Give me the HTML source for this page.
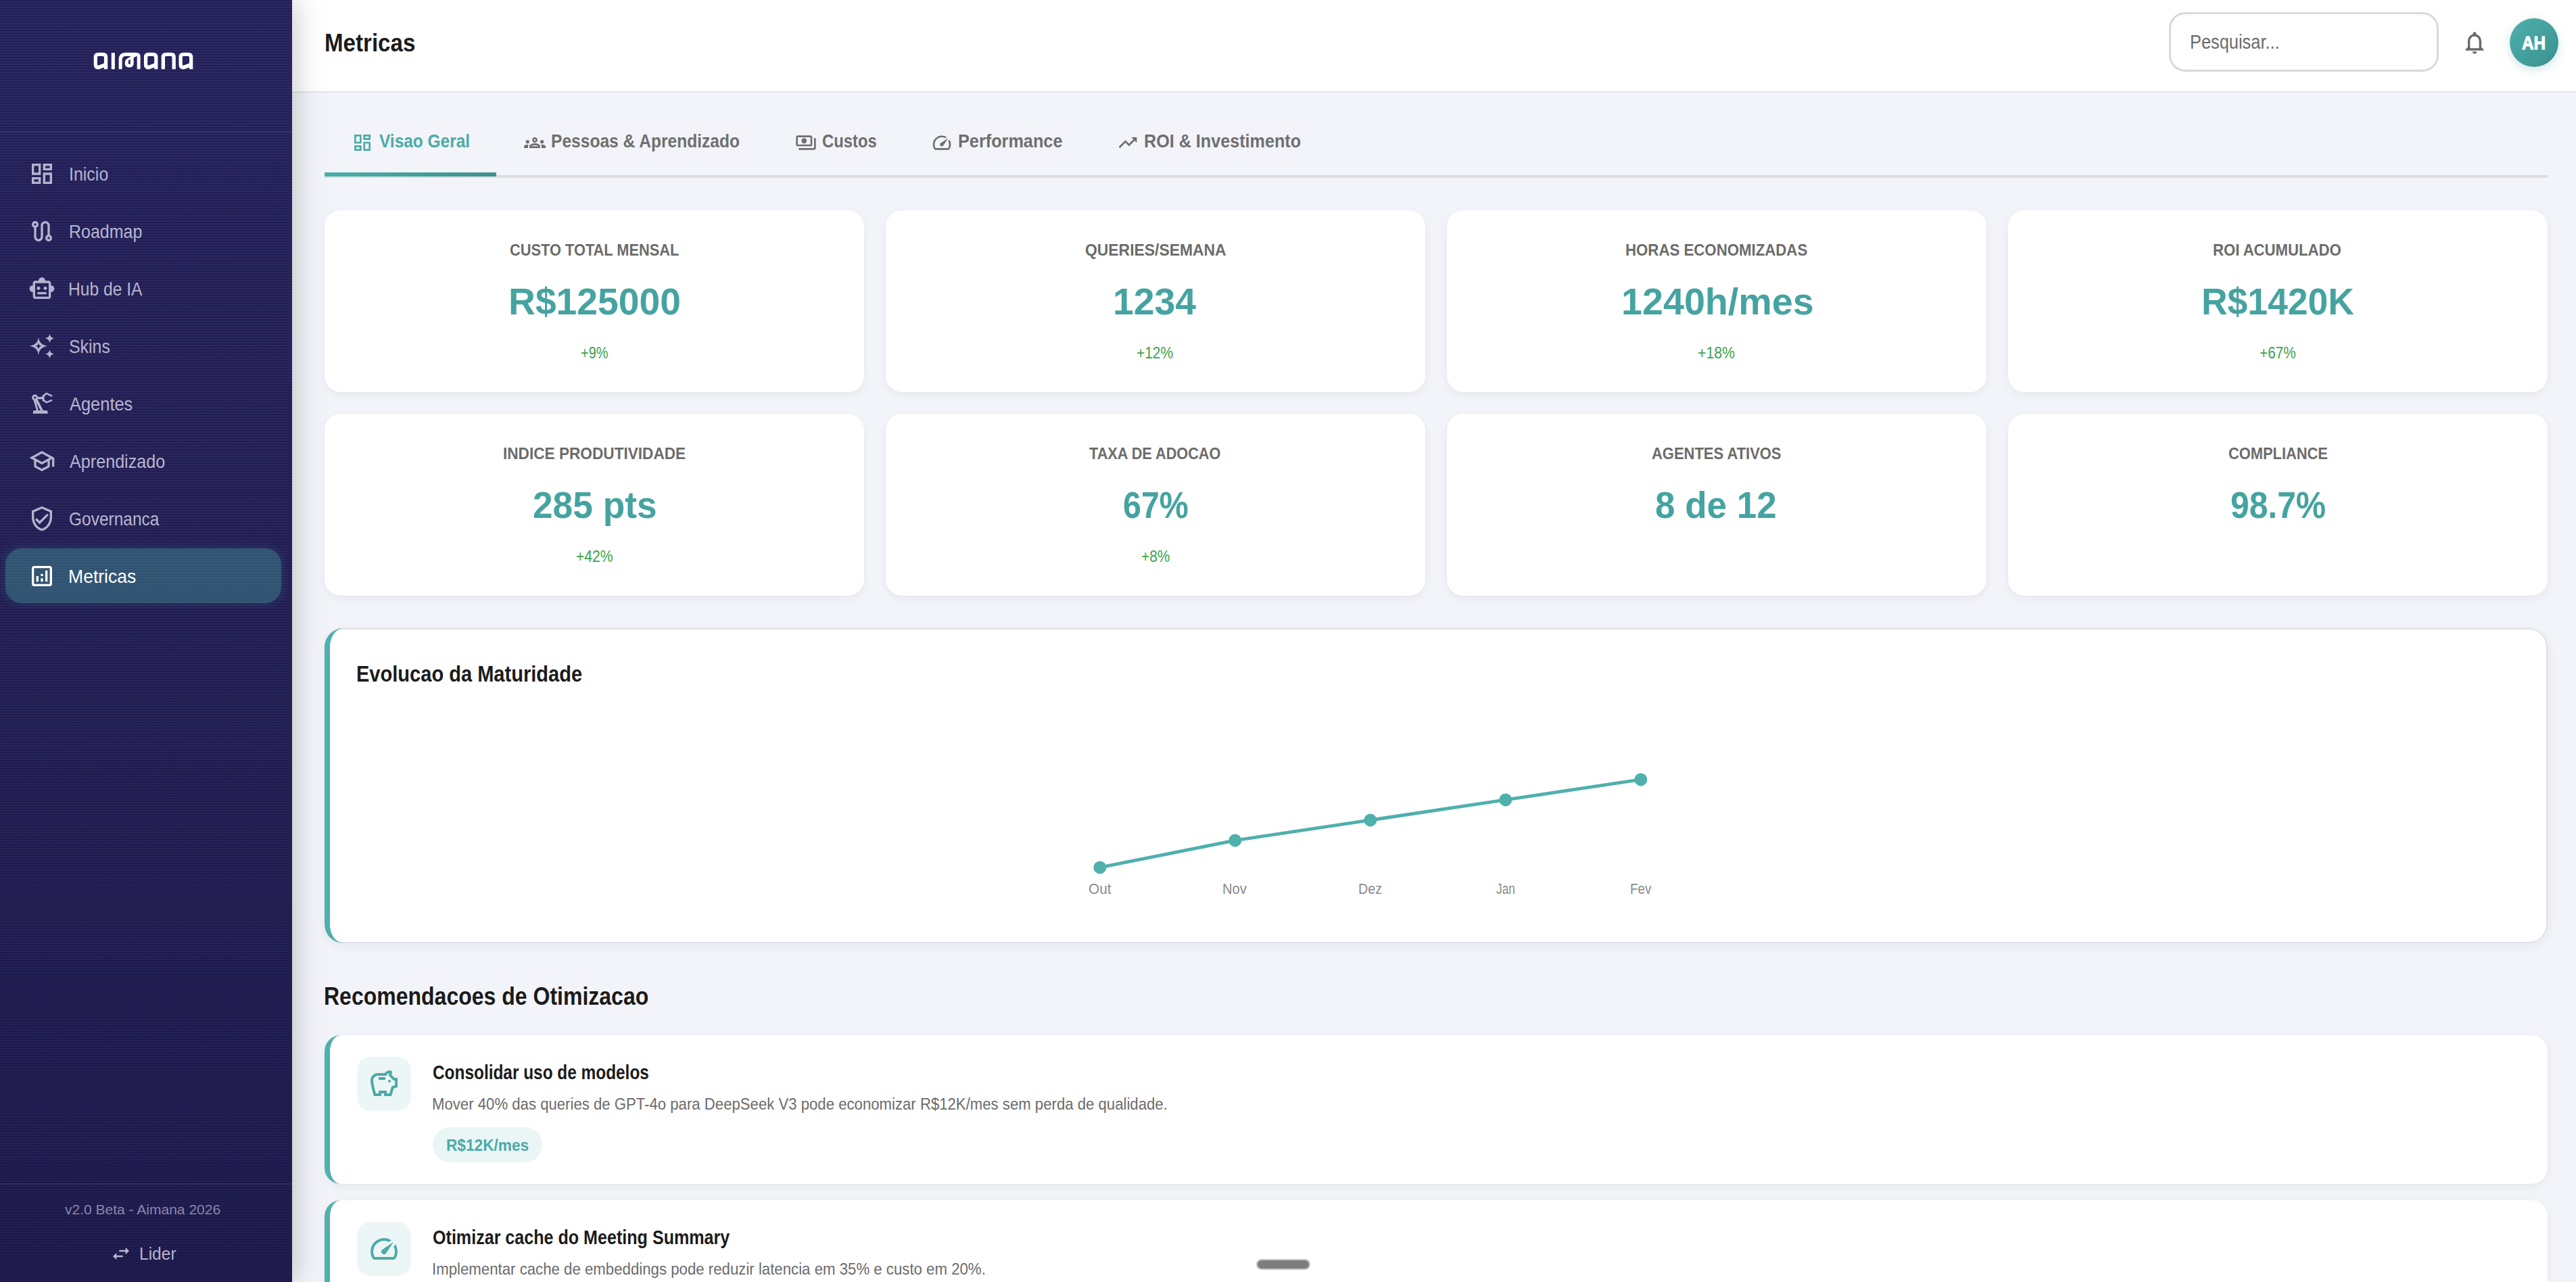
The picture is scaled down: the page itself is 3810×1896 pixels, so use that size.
<!DOCTYPE html>
<html>
<head>
<meta charset="utf-8">
<style>
*{box-sizing:border-box;margin:0;padding:0}
html,body{width:3810px;height:1896px;overflow:hidden;background:#f3f4f9;font-family:"Liberation Sans",sans-serif;position:relative}
.a{position:absolute}
.t{position:absolute;white-space:nowrap;line-height:1}
#sb{left:0;top:0;width:432px;height:1896px;background:linear-gradient(180deg,#2d2962 0%,#2a2659 45%,#221e4e 100%);z-index:5;box-shadow:0 0 44px rgba(0,0,0,0.25)}
#sb:before{content:"";position:absolute;left:0;top:0;right:0;bottom:0;background:repeating-linear-gradient(180deg,rgba(16,14,70,0.36) 0px,rgba(16,14,70,0.36) 2px,rgba(0,0,0,0) 2px,rgba(0,0,0,0) 4px)}
#hdr{left:432px;top:0;width:3378px;height:137px;background:#fff;border-bottom:2px solid #e2e3ea}
.card{position:absolute;background:#fff;border-radius:24px;box-shadow:0 4px 14px rgba(30,30,60,0.05),0 1px 3px rgba(30,30,60,0.03)}
</style>
</head>
<body>
<div id="sb" class="a">
<div class="a" style="left:0;top:194px;width:432px;height:2px;background:rgba(255,255,255,0.07)"></div>
<div class="a" style="left:0;top:1750px;width:432px;height:2px;background:rgba(255,255,255,0.07)"></div>
<svg class="a" style="left:130px;top:70px;width:160px;height:40px" viewBox="0 0 2576 644" fill="#fff">
<path fill-rule="evenodd" d="M250 125 H360 Q470 125 470 235 V520 H385 V480 L260 525 Q140 525 140 415 V235 Q140 125 250 125Z M250 210 Q225 210 225 240 V405 Q225 435 255 432 L385 380 V240 Q385 210 355 210Z"/>
<rect x="560" y="130" width="82" height="390"/>
<path fill-rule="evenodd" d="M1335 235 Q1335 125 1445 125 H1555 Q1665 125 1665 235 V520 H1580 V480 L1455 525 Q1335 525 1335 415Z M1445 210 Q1420 210 1420 240 V405 Q1420 435 1450 432 L1580 380 V240 Q1580 210 1550 210Z"/>
<path d="M1750 520 V235 Q1750 125 1860 125 H1980 Q2090 125 2090 235 V520 H2005 V240 Q2005 210 1975 210 H1865 Q1835 210 1835 240 V520Z"/>
<path fill-rule="evenodd" d="M2165 235 Q2165 125 2275 125 H2390 Q2500 125 2500 235 V520 H2415 V480 L2290 525 Q2165 525 2165 415Z M2275 210 Q2250 210 2250 240 V405 Q2250 435 2280 432 L2415 380 V240 Q2415 210 2385 210Z"/>
<path d="M735 520 V290 Q735 125 900 125 H1150 Q1250 125 1250 225 V520 H1170 V215 Q1170 205 1160 210 L1090 250 Q1090 260 1090 380 Q1090 480 985 480 Q880 480 880 380 Q880 300 940 265 L1030 210 H905 Q815 210 815 300 V520Z M965 310 V400 H1010 V290Z" fill-rule="evenodd"/>
</svg>
<div class="a" style="left:8px;top:811px;width:408px;height:81px;border-radius:24px;background:rgba(74,171,168,0.38);box-shadow:0 0 14px rgba(74,171,168,0.22)"></div>
<svg class="a" style="left:42px;top:237px;width:40px;height:40px;fill:#b6b3cf;stroke:#b6b3cf;stroke-width:0" viewBox="0 0 24 24"><path d="M19 5v2h-4V5h4M9 5v6H5V5h4m10 8v6h-4v-6h4M9 17v2H5v-2h4M21 3h-8v6h8V3zM11 3H3v10h8V3zm10 8h-8v10h8V11zm-10 4H3v6h8v-6z"/></svg>
<div class="t" style="left:101.78px;top:243.95px;font-size:27.5px;color:#b8b5d0;font-weight:normal;transform:scaleX(0.9079);transform-origin:0 0">Inicio</div>
<svg class="a" style="left:42px;top:322px;width:40px;height:40px;fill:#b6b3cf;stroke:#b6b3cf;stroke-width:0" viewBox="0 0 24 24"><path d="M19 15.18V7c0-2.21-1.79-4-4-4s-4 1.79-4 4v10c0 1.1-.9 2-2 2s-2-.9-2-2V8.82C8.16 8.4 9 7.3 9 6c0-1.66-1.34-3-3-3S3 4.34 3 6c0 1.3.84 2.4 2 2.82V17c0 2.21 1.79 4 4 4s4-1.79 4-4V7c0-1.1.9-2 2-2s2 .9 2 2v8.18c-1.16.41-2 1.51-2 2.82 0 1.66 1.34 3 3 3s3-1.34 3-3c0-1.3-.84-2.4-2-2.82zM6 7c-.55 0-1-.45-1-1s.45-1 1-1 1 .45 1 1-.45 1-1 1zm12 12c-.55 0-1-.45-1-1s.45-1 1-1 1 .45 1 1-.45 1-1 1z"/></svg>
<div class="t" style="left:101.78px;top:328.95px;font-size:27.5px;color:#b8b5d0;font-weight:normal;transform:scaleX(0.9081);transform-origin:0 0">Roadmap</div>
<svg class="a" style="left:42px;top:407px;width:40px;height:40px;fill:#b6b3cf;stroke:#b6b3cf;stroke-width:0" viewBox="0 0 24 24"><path d="M20 9V7c0-1.1-.9-2-2-2h-3c0-1.66-1.34-3-3-3S9 3.34 9 5H6c-1.1 0-2 .9-2 2v2c-1.66 0-3 1.34-3 3s1.34 3 3 3v4c0 1.1.9 2 2 2h12c1.1 0 2-.9 2-2v-4c1.66 0 3-1.34 3-3s-1.34-3-3-3zm-2 10H6V7h12v12zm-9-6c-.83 0-1.5-.67-1.5-1.5S8.17 10 9 10s1.5.67 1.5 1.5S9.83 13 9 13zm7.5-1.5c0 .83-.67 1.5-1.5 1.5s-1.5-.67-1.5-1.5.67-1.5 1.5-1.5 1.5.67 1.5 1.5zM8 15h8v2H8v-2z"/></svg>
<div class="t" style="left:100.71px;top:413.95px;font-size:27.5px;color:#b8b5d0;font-weight:normal;transform:scaleX(0.8945);transform-origin:0 0">Hub de IA</div>
<svg class="a" style="left:42px;top:492px;width:40px;height:40px;fill:#b6b3cf;stroke:#b6b3cf;stroke-width:0" viewBox="0 0 24 24"><path fill-rule="evenodd" d="M8.96 4.20 Q9.96 10.90 16.66 11.90 Q9.96 12.90 8.96 19.60 Q7.96 12.90 1.26 11.90 Q7.96 10.90 8.96 4.20Z M8.96 9.00 Q9.25 11.61 11.86 11.90 Q9.25 12.19 8.96 14.80 Q8.67 12.19 6.06 11.90 Q8.67 11.61 8.96 9.00Z"/><path d="M18.88 1.10 Q19.43 4.50 22.83 5.05 Q19.43 5.60 18.88 9.00 Q18.33 5.60 14.93 5.05 Q18.33 4.50 18.88 1.10Z M18.88 14.95 Q19.43 18.35 22.83 18.90 Q19.43 19.45 18.88 22.85 Q18.33 19.45 14.93 18.90 Q18.33 18.35 18.88 14.95Z"/></svg>
<div class="t" style="left:101.59px;top:498.95px;font-size:27.5px;color:#b8b5d0;font-weight:normal;transform:scaleX(0.9054);transform-origin:0 0">Skins</div>
<svg class="a" style="left:42px;top:577px;width:40px;height:40px;fill:#b6b3cf;stroke:#b6b3cf;stroke-width:0" viewBox="0 0 24 24"><path fill-rule="evenodd" d="M3.1 6.6a2.7 2.7 0 1 0 5.4 0a2.7 2.7 0 1 0 -5.4 0Z M4.9 6.6a0.95 0.95 0 1 0 1.9 0a0.95 0.95 0 1 0 -1.9 0Z"/><path d="M8.2 6.0H12.6V8.0H8.2Z M12.3 4.6 L13.3 4.1 L14.1 4.6 V9.6 L13.3 10.1 L12.3 9.6Z"/><path fill="none" stroke-width="1.55" stroke-linecap="round" stroke-linejoin="round" d="M13.6 5.0 L16.1 2.9 L20.5 5.0 M13.6 9.0 L16.1 10.9 L20.5 9.1"/><path fill-rule="evenodd" d="M4.4 8.7 L7.2 18.2 L13.2 18.2 L8.1 7.9Z M6.8 10.3 L8.9 18.2 L10.8 18.2Z"/><path d="M4.1 20.9 V19.5 Q4.1 18 5.6 18 H15.7 Q17.2 18 17.2 19.5 V20.9Z"/></svg>
<div class="t" style="left:102.50px;top:583.95px;font-size:27.5px;color:#b8b5d0;font-weight:normal;transform:scaleX(0.9245);transform-origin:0 0">Agentes</div>
<svg class="a" style="left:42px;top:662px;width:40px;height:40px;fill:#b6b3cf;stroke:#b6b3cf;stroke-width:0" viewBox="0 0 24 24"><path d="M12 3L1 9l4 2.18v6L12 21l7-3.82v-6l2-1.09V17h2V9L12 3zm6.82 6L12 12.72 5.18 9 12 5.28 18.82 9zM17 15.99l-5 2.73-5-2.73v-3.72L12 15l5-2.73v3.72z"/></svg>
<div class="t" style="left:102.50px;top:668.95px;font-size:27.5px;color:#b8b5d0;font-weight:normal;transform:scaleX(0.9148);transform-origin:0 0">Aprendizado</div>
<svg class="a" style="left:42px;top:747px;width:40px;height:40px;fill:#b6b3cf;stroke:#b6b3cf;stroke-width:0" viewBox="0 0 24 24"><path d="M12 1L3 5v6c0 5.55 3.84 10.74 9 12 5.16-1.26 9-6.45 9-12V5l-9-4zm7 10c0 4.52-2.98 8.69-7 9.93-4.02-1.24-7-5.41-7-9.93V6.3l7-3.11 7 3.11V11zm-11.59.59L6 13l4 4 8-8-1.41-1.42L10 14.17z"/></svg>
<div class="t" style="left:101.61px;top:753.95px;font-size:27.5px;color:#b8b5d0;font-weight:normal;transform:scaleX(0.8909);transform-origin:0 0">Governanca</div>
<svg class="a" style="left:42px;top:832px;width:40px;height:40px;fill:#ffffff;stroke:#ffffff;stroke-width:0" viewBox="0 0 24 24"><path d="M19 3H5c-1.1 0-2 .9-2 2v14c0 1.1.9 2 2 2h14c1.1 0 2-.9 2-2V5c0-1.1-.9-2-2-2zm0 16H5V5h14v14zM7 12h2v5H7zm8-5h2v10h-2zm-4 7h2v3h-2zm0-4h2v2h-2z"/></svg>
<div class="t" style="left:100.57px;top:838.95px;font-size:27.5px;color:#ffffff;font-weight:normal;transform:scaleX(0.9659);transform-origin:0 0">Metricas</div>
<div class="t" style="left:96.40px;top:1778.40px;font-size:21px;color:#8b88a9;font-weight:normal;transform:scaleX(1.0006);transform-origin:0 0">v2.0 Beta - Aimana 2026</div>
<svg class="a" style="left:163px;top:1838.3px;width:32px;height:32px;fill:#b8b5d0;stroke:#b8b5d0;stroke-width:0" viewBox="0 0 24 24"><path d="M6.99 11L3 15l3.99 4v-3H14v-2H6.99v-3zM21 9l-3.99-4v3H10v2h7.01v3L21 9z"/></svg>
<div class="t" style="left:206.11px;top:1840.70px;font-size:26px;color:#b8b5d0;font-weight:normal;transform:scaleX(0.9438);transform-origin:0 0">Lider</div>
</div>
<div id="hdr" class="a"></div>
<div class="t" style="left:479.56px;top:45.90px;font-size:36px;color:#1b1b1b;font-weight:bold;transform:scaleX(0.9199);transform-origin:0 0">Metricas</div>
<div class="a" style="left:3208px;top:18px;width:399px;height:88px;border:3px solid #d9d9d9;border-radius:24px;background:#fff"></div>
<div class="t" style="left:3239.15px;top:48.30px;font-size:29px;color:#6b6b6b;font-weight:normal;transform:scaleX(0.8754);transform-origin:0 0">Pesquisar...</div>
<svg class="a" style="left:3640px;top:43px;width:40px;height:40px;fill:#6a6a6a;stroke:#6a6a6a;stroke-width:0" viewBox="0 0 24 24"><path d="M12 22c1.1 0 2-.9 2-2h-4c0 1.1.89 2 2 2zm6-6v-5c0-3.07-1.64-5.64-4.5-6.32V4c0-.83-.67-1.5-1.5-1.5s-1.5.67-1.5 1.5v.68C7.63 5.36 6 7.92 6 11v5l-2 2v1h16v-1l-2-2zm-2 1H8v-6c0-2.48 1.51-4.5 4-4.5s4 2.02 4 4.5v6z"/></svg>
<div class="a" style="left:3712px;top:27px;width:72px;height:72px;border-radius:50%;background:linear-gradient(135deg,#4db0ad,#3b918e);box-shadow:0 4px 14px rgba(60,150,145,0.25)"></div>
<div class="t" style="left:3730.40px;top:49.50px;font-size:28px;color:#ffffff;font-weight:bold;transform:scaleX(0.8643);transform-origin:0 0;-webkit-text-stroke:1.2px #fff">AH</div>
<div class="a" style="left:480px;top:259px;width:3288px;height:4px;background:#dcdcdf"></div>
<div class="a" style="left:480px;top:255px;width:254px;height:6px;background:linear-gradient(90deg,#4aaeaa,#3d928f);border-radius:1px"></div>
<svg class="a" style="left:520px;top:195px;width:32px;height:32px;fill:#4aaba8;stroke:#4aaba8;stroke-width:0" viewBox="0 0 24 24"><path d="M19 5v2h-4V5h4M9 5v6H5V5h4m10 8v6h-4v-6h4M9 17v2H5v-2h4M21 3h-8v6h8V3zM11 3H3v10h8V3zm10 8h-8v10h8V11zm-10 4H3v6h8v-6z"/></svg>
<div class="t" style="left:560.50px;top:194.50px;font-size:28px;color:#4aaba8;font-weight:bold;transform:scaleX(0.8729);transform-origin:0 0">Visao Geral</div>
<svg class="a" style="left:774.5px;top:195px;width:32px;height:32px;fill:#6f6f6f;stroke:#6f6f6f;stroke-width:0" viewBox="0 0 24 24"><path d="M4 13c1.1 0 2-.9 2-2s-.9-2-2-2-2 .9-2 2 .9 2 2 2zm1.13 1.1c-.37-.06-.74-.1-1.13-.1-.99 0-1.93.21-2.78.58C.48 14.9 0 15.62 0 16.43V18h4.5v-1.61c0-.83.23-1.61.63-2.29zM20 13c1.1 0 2-.9 2-2s-.9-2-2-2-2 .9-2 2 .9 2 2 2zm4 3.43c0-.81-.48-1.53-1.22-1.85-.85-.37-1.79-.58-2.78-.58-.39 0-.76.04-1.13.1.4.68.63 1.46.63 2.29V18H24v-1.57zM16.24 13.65c-1.17-.52-2.61-.9-4.24-.9-1.63 0-3.07.39-4.24.9C6.68 14.13 6 15.21 6 16.39V18h12v-1.61c0-1.18-.68-2.26-1.76-2.74zM8.07 16c.09-.23.13-.39.91-.69.97-.38 1.99-.56 3.02-.56s2.05.18 3.02.56c.77.3.81.46.91.69H8.07zM12 8c.55 0 1 .45 1 1s-.45 1-1 1-1-.45-1-1 .45-1 1-1m0-2c-1.66 0-3 1.34-3 3s1.34 3 3 3 3-1.34 3-3-1.34-3-3-3z"/></svg>
<div class="t" style="left:815.12px;top:194.50px;font-size:28px;color:#6f6f6f;font-weight:bold;transform:scaleX(0.8777);transform-origin:0 0">Pessoas &amp; Aprendizado</div>
<svg class="a" style="left:1175.7px;top:195px;width:32px;height:32px;fill:#6f6f6f;stroke:#6f6f6f;stroke-width:0" viewBox="0 0 24 24"><path d="M19 14V6c0-1.1-.9-2-2-2H3c-1.1 0-2 .9-2 2v8c0 1.1.9 2 2 2h14c1.1 0 2-.9 2-2zm-2 0H3V6h14v8zm-7-7c-1.66 0-3 1.34-3 3s1.34 3 3 3 3-1.34 3-3-1.34-3-3-3zm13 0v11c0 1.1-.9 2-2 2H4v-2h17V7h2z"/></svg>
<div class="t" style="left:1215.65px;top:194.50px;font-size:28px;color:#6f6f6f;font-weight:bold;transform:scaleX(0.8519);transform-origin:0 0">Custos</div>
<svg class="a" style="left:1376.7px;top:195px;width:32px;height:32px;fill:#6f6f6f;stroke:#6f6f6f;stroke-width:0" viewBox="0 0 24 24"><path d="M20.38 8.57l-1.23 1.85a8 8 0 0 1-.22 7.58H5.07A8 8 0 0 1 15.58 6.85l1.85-1.23A10 10 0 0 0 3.35 19a2 2 0 0 0 1.72 1h13.85a2 2 0 0 0 1.74-1 10 10 0 0 0-.27-10.44zm-9.79 6.84a2 2 0 0 0 2.83 0l5.66-8.49-8.49 5.66a2 2 0 0 0 0 2.83z"/></svg>
<div class="t" style="left:1417.10px;top:194.50px;font-size:28px;color:#6f6f6f;font-weight:bold;transform:scaleX(0.9021);transform-origin:0 0">Performance</div>
<svg class="a" style="left:1652.3px;top:195px;width:32px;height:32px;fill:#6f6f6f;stroke:#6f6f6f;stroke-width:0" viewBox="0 0 24 24"><path d="M16 6l2.29 2.29-4.88 4.88-4-4L2 16.59 3.41 18l6-6 4 4 6.3-6.29L22 12V6z"/></svg>
<div class="t" style="left:1692.10px;top:194.50px;font-size:28px;color:#6f6f6f;font-weight:bold;transform:scaleX(0.8983);transform-origin:0 0">ROI &amp; Investimento</div>
<div class="card" style="left:480px;top:311px;width:798px;height:269px"></div>
<div class="t" style="left:753.70px;top:357.50px;font-size:23.8px;color:#6b6b6b;font-weight:bold;transform:scaleX(0.9164);transform-origin:0 0">CUSTO TOTAL MENSAL</div>
<div class="t" style="left:752.02px;top:419.25px;font-size:55.5px;color:#45a3a0;font-weight:bold;transform:scaleX(0.9949);transform-origin:0 0">R$125000</div>
<div class="t" style="left:858.93px;top:511.10px;font-size:23px;color:#3aa349;font-weight:normal;transform:scaleX(0.8668);transform-origin:0 0">+9%</div>
<div class="card" style="left:1310px;top:311px;width:798px;height:269px"></div>
<div class="t" style="left:1604.60px;top:357.50px;font-size:23.8px;color:#6b6b6b;font-weight:bold;transform:scaleX(0.9619);transform-origin:0 0">QUERIES/SEMANA</div>
<div class="t" style="left:1646.41px;top:419.25px;font-size:55.5px;color:#45a3a0;font-weight:bold;transform:scaleX(0.9967);transform-origin:0 0">1234</div>
<div class="t" style="left:1681.49px;top:511.10px;font-size:23px;color:#3aa349;font-weight:normal;transform:scaleX(0.9101);transform-origin:0 0">+12%</div>
<div class="card" style="left:2140px;top:311px;width:798px;height:269px"></div>
<div class="t" style="left:2404.07px;top:357.50px;font-size:23.8px;color:#6b6b6b;font-weight:bold;transform:scaleX(0.9342);transform-origin:0 0">HORAS ECONOMIZADAS</div>
<div class="t" style="left:2397.59px;top:419.25px;font-size:55.5px;color:#45a3a0;font-weight:bold;transform:scaleX(1.0032);transform-origin:0 0">1240h/mes</div>
<div class="t" style="left:2511.08px;top:511.10px;font-size:23px;color:#3aa349;font-weight:normal;transform:scaleX(0.9239);transform-origin:0 0">+18%</div>
<div class="card" style="left:2970px;top:311px;width:798px;height:269px"></div>
<div class="t" style="left:3273.17px;top:357.50px;font-size:23.8px;color:#6b6b6b;font-weight:bold;transform:scaleX(0.9293);transform-origin:0 0">ROI ACUMULADO</div>
<div class="t" style="left:3255.51px;top:419.25px;font-size:55.5px;color:#45a3a0;font-weight:bold;transform:scaleX(0.9628);transform-origin:0 0">R$1420K</div>
<div class="t" style="left:3342.20px;top:511.10px;font-size:23px;color:#3aa349;font-weight:normal;transform:scaleX(0.9032);transform-origin:0 0">+67%</div>
<div class="card" style="left:480px;top:612px;width:798px;height:269px"></div>
<div class="t" style="left:743.65px;top:658.50px;font-size:23.8px;color:#6b6b6b;font-weight:bold;transform:scaleX(0.9505);transform-origin:0 0">INDICE PRODUTIVIDADE</div>
<div class="t" style="left:788.44px;top:720.25px;font-size:55.5px;color:#45a3a0;font-weight:bold;transform:scaleX(0.9596);transform-origin:0 0">285 pts</div>
<div class="t" style="left:851.78px;top:812.10px;font-size:23px;color:#3aa349;font-weight:normal;transform:scaleX(0.9187);transform-origin:0 0">+42%</div>
<div class="card" style="left:1310px;top:612px;width:798px;height:269px"></div>
<div class="t" style="left:1611.00px;top:658.50px;font-size:23.8px;color:#6b6b6b;font-weight:bold;transform:scaleX(0.9112);transform-origin:0 0">TAXA DE ADOCAO</div>
<div class="t" style="left:1660.86px;top:720.25px;font-size:55.5px;color:#45a3a0;font-weight:bold;transform:scaleX(0.8707);transform-origin:0 0">67%</div>
<div class="t" style="left:1688.09px;top:812.10px;font-size:23px;color:#3aa349;font-weight:normal;transform:scaleX(0.9066);transform-origin:0 0">+8%</div>
<div class="card" style="left:2140px;top:612px;width:798px;height:269px"></div>
<div class="t" style="left:2442.80px;top:658.50px;font-size:23.8px;color:#6b6b6b;font-weight:bold;transform:scaleX(0.9225);transform-origin:0 0">AGENTES ATIVOS</div>
<div class="t" style="left:2448.45px;top:720.25px;font-size:55.5px;color:#45a3a0;font-weight:bold;transform:scaleX(0.9545);transform-origin:0 0">8 de 12</div>
<div class="card" style="left:2970px;top:612px;width:798px;height:269px"></div>
<div class="t" style="left:3295.60px;top:658.50px;font-size:23.8px;color:#6b6b6b;font-weight:bold;transform:scaleX(0.9183);transform-origin:0 0">COMPLIANCE</div>
<div class="t" style="left:3298.50px;top:720.25px;font-size:55.5px;color:#45a3a0;font-weight:bold;transform:scaleX(0.8960);transform-origin:0 0">98.7%</div>
<div class="card" style="left:480px;top:929px;width:3288px;height:466px;border:2px solid #e1e0e6;border-left:none;border-radius:28px;box-shadow:0 4px 16px rgba(30,30,60,0.06)"></div>
<div class="a" style="left:480px;top:929px;width:60px;height:466px;border-left:8px solid #4fb0ac;border-radius:28px 0 0 28px"></div>
<div class="t" style="left:527.29px;top:978.50px;font-size:34px;color:#1b1b1b;font-weight:bold;transform:scaleX(0.8543);transform-origin:0 0">Evolucao da Maturidade</div>
<svg class="a" style="left:0;top:0;width:3810px;height:1896px;overflow:visible" viewBox="0 0 3810 1896"><path d="M1626.8,1282.9 L1826.8,1242.9 L2026.8,1212.9 L2226.8,1182.9 L2426.8,1152.9" fill="none" stroke="#4fb0ac" stroke-width="5" stroke-linejoin="round"/><circle cx="1626.8" cy="1282.9" r="9.5" fill="#4fb0ac"/><circle cx="1826.8" cy="1242.9" r="9.5" fill="#4fb0ac"/><circle cx="2026.8" cy="1212.9" r="9.5" fill="#4fb0ac"/><circle cx="2226.8" cy="1182.9" r="9.5" fill="#4fb0ac"/><circle cx="2426.8" cy="1152.9" r="9.5" fill="#4fb0ac"/></svg>
<div class="t" style="left:1609.78px;top:1304.25px;font-size:22.5px;color:#8a8a8a;font-weight:normal;transform:scaleX(0.9218);transform-origin:0 0">Out</div>
<div class="t" style="left:1808.40px;top:1304.25px;font-size:22.5px;color:#8a8a8a;font-weight:normal;transform:scaleX(0.8978);transform-origin:0 0">Nov</div>
<div class="t" style="left:2009.13px;top:1304.25px;font-size:22.5px;color:#8a8a8a;font-weight:normal;transform:scaleX(0.8746);transform-origin:0 0">Dez</div>
<div class="t" style="left:2212.90px;top:1304.25px;font-size:22.5px;color:#8a8a8a;font-weight:normal;transform:scaleX(0.7689);transform-origin:0 0">Jan</div>
<div class="t" style="left:2410.97px;top:1304.25px;font-size:22.5px;color:#8a8a8a;font-weight:normal;transform:scaleX(0.8347);transform-origin:0 0">Fev</div>
<div class="t" style="left:479.27px;top:1455.30px;font-size:37px;color:#1b1b1b;font-weight:bold;transform:scaleX(0.8650);transform-origin:0 0">Recomendacoes de Otimizacao</div>
<div class="card" style="left:480px;top:1531px;width:3288px;height:220px;border-radius:24px"></div>
<div class="a" style="left:480px;top:1531px;width:60px;height:220px;border-left:8px solid #4fb0ac;border-radius:24px 0 0 24px"></div>
<div class="a" style="left:528px;top:1562.5px;width:80px;height:80px;border-radius:20px;background:#edf6f6"></div>
<svg class="a" style="left:544px;top:1578.8px;width:48px;height:48px;fill:#4aaba8;stroke:#4aaba8;stroke-width:0" viewBox="0 0 24 24"><path d="M15 10c0-.55.45-1 1-1s1 .45 1 1-.45 1-1 1-1-.45-1-1zM8 9h5V7H8v2zm14-1.5v6.97l-2.82.94L17.5 21H12v-2h-2v2H4.5S2 12.54 2 9.5 4.46 4 7.5 4h5c.91-1.21 2.36-2 4-2 .83 0 1.5.67 1.5 1.5 0 .21-.04.4-.12.58-.14.34-.26.73-.32 1.15l2.27 2.27H22zm-2 2h-1L15.5 6c0-.65.09-1.29.26-1.91-.97.25-1.76.97-2.09 1.91H7.5C5.57 6 4 7.57 4 9.5c0 1.88 1.22 6.65 2.01 9.5H8v-2h6v2h2.01l1.55-5.15 2.44-.82V9.5z"/></svg>
<div class="t" style="left:639.90px;top:1571.90px;font-size:28.6px;color:#1b1b1b;font-weight:bold;transform:scaleX(0.8531);transform-origin:0 0">Consolidar uso de modelos</div>
<div class="t" style="left:639.18px;top:1621.30px;font-size:24.4px;color:#6b6b6b;font-weight:normal;transform:scaleX(0.9086);transform-origin:0 0">Mover 40% das queries de GPT-4o para DeepSeek V3 pode economizar R$12K/mes sem perda de qualidade.</div>
<div class="a" style="left:640px;top:1667px;width:162px;height:52px;border-radius:26px;background:#eaf5f5"></div>
<div class="t" style="left:660.05px;top:1681.70px;font-size:23.8px;color:#4aaba8;font-weight:bold;transform:scaleX(0.9522);transform-origin:0 0">R$12K/mes</div>
<div class="card" style="left:480px;top:1775px;width:3288px;height:220px;border-radius:24px"></div>
<div class="a" style="left:480px;top:1775px;width:60px;height:220px;border-left:8px solid #4fb0ac;border-radius:24px 0 0 24px"></div>
<div class="a" style="left:528px;top:1806.5px;width:80px;height:80px;border-radius:20px;background:#edf6f6"></div>
<svg class="a" style="left:544px;top:1822.8px;width:48px;height:48px;fill:#4aaba8;stroke:#4aaba8;stroke-width:0" viewBox="0 0 24 24"><path d="M20.38 8.57l-1.23 1.85a8 8 0 0 1-.22 7.58H5.07A8 8 0 0 1 15.58 6.85l1.85-1.23A10 10 0 0 0 3.35 19a2 2 0 0 0 1.72 1h13.85a2 2 0 0 0 1.74-1 10 10 0 0 0-.27-10.44zm-9.79 6.84a2 2 0 0 0 2.83 0l5.66-8.49-8.49 5.66a2 2 0 0 0 0 2.83z"/></svg>
<div class="t" style="left:639.87px;top:1815.90px;font-size:28.6px;color:#1b1b1b;font-weight:bold;transform:scaleX(0.8776);transform-origin:0 0">Otimizar cache do Meeting Summary</div>
<div class="t" style="left:639.18px;top:1865.30px;font-size:24.4px;color:#6b6b6b;font-weight:normal;transform:scaleX(0.9109);transform-origin:0 0">Implementar cache de embeddings pode reduzir latencia em 35% e custo em 20%.</div>
<div class="a" style="left:1858px;top:1862px;width:80px;height:16px;border-radius:8px;background:#7d7d7d;border:2px solid #c2c2c2"></div>
</body>
</html>
